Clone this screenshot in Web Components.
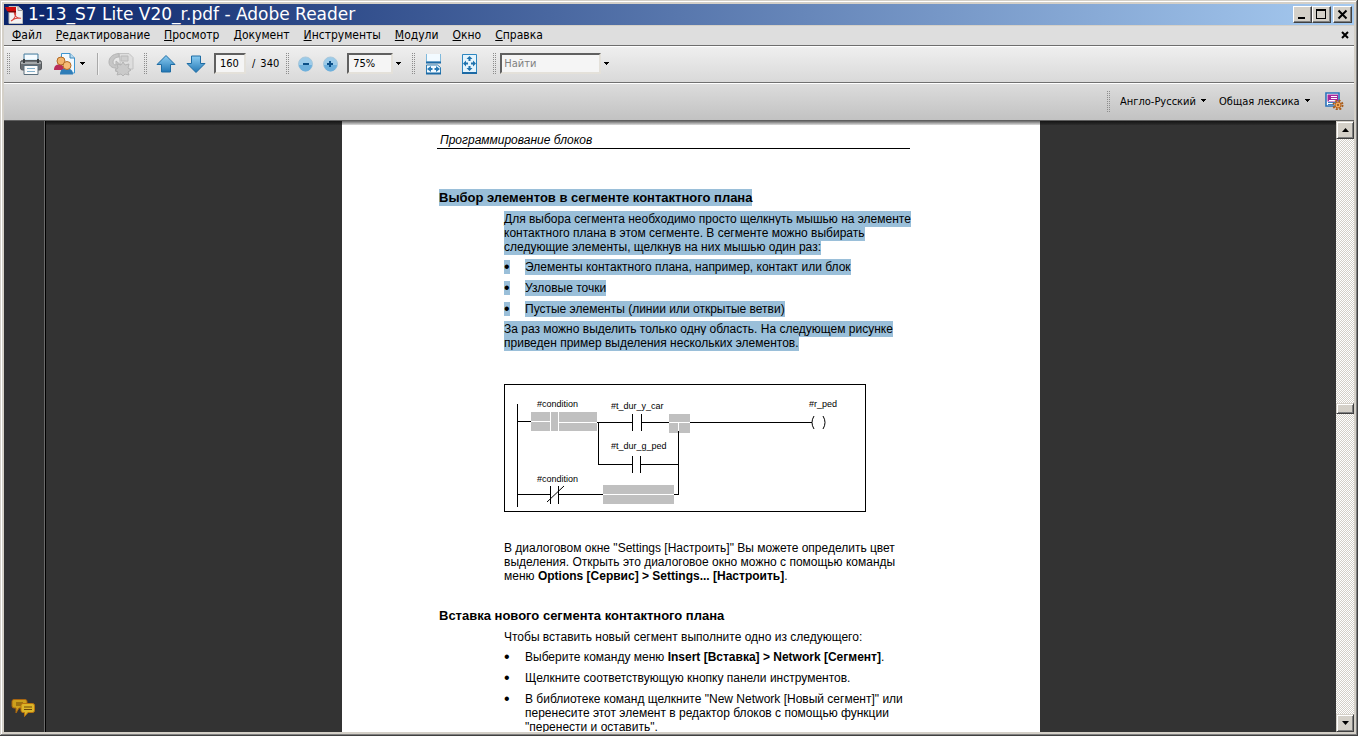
<!DOCTYPE html>
<html lang="ru">
<head>
<meta charset="utf-8">
<title>1-13_S7 Lite V20_r.pdf - Adobe Reader</title>
<style>
  html, body { margin: 0; height: 100%; overflow: hidden; }
  body { font-family: "DejaVu Sans Condensed", "DejaVu Sans", sans-serif; font-size: 12px; color: #000; }
</style>
</head>
<body>
<reader-window></reader-window>

<script>
const define = (name, html) => {
  const template = document.createElement('template');
  template.innerHTML = html;
  customElements.define(name, class extends HTMLElement {
    constructor() {
      super();
      this.attachShadow({ mode: 'open' }).append(template.content.cloneNode(true));
    }
  });
};

/* Small building blocks */
define('tool-grip', `
<style>
  :host { display: block; flex: none; width: 3px; height: 21px;
    background: conic-gradient(#8c8c8c 25%, transparent 0) 1px 0 / 2px 2px; }
</style>`);

define('drop-arrow', `
<style>
  :host { display: block; flex: none; width: 7px; height: 4px; }
  button { display: block; border: 0; padding: 0; background: none; width: 7px; height: 4px; }
  svg { display: block; }
</style>
<button aria-label="Открыть список"><svg width="7" height="4" viewBox="0 0 7 4" shape-rendering="crispEdges"><path d="M1 0h5v1H1zM2 1h3v1H2zM3 2h1v1H3z"/></svg></button>`);

define('tool-button', `
<style>
  :host { display: block; flex: none; width: 30px; height: 30px; }
  :host([narrow]) { width: 25px; }
  button { display: flex; align-items: center; justify-content: center; width: 100%; height: 100%;
    border: 0; padding: 0; background: none; }
</style>
<button><slot></slot></button>`);

define('menu-item', `
<style>
  :host { display: block; }
  button { border: 0; padding: 0; background: none; font: inherit; color: inherit; line-height: 18px; }
</style>
<button><slot></slot></button>`);

define('title-bar', `
<style>
  :host { display: flex; align-items: center; height: 21px; padding: 0 2px 0 1px; box-sizing: border-box;
    background: linear-gradient(90deg, #0a246a, #a6caf0); color: #fff; }
  h1 { flex: 1; margin: 0 0 0 4px; font: 17px/21px "DejaVu Sans", sans-serif; white-space: nowrap; }
  .icon { display: block; }
  button { width: 19px; height: 17px; padding: 0; border: 1px solid; border-color: #fff #404040 #404040 #fff;
    box-shadow: inset -1px -1px #808080; background: #d4d0c8; display: block; }
  button svg { display: block; }
  .close { margin-left: 2px; }
</style>
<svg class="icon" width="19" height="18" viewBox="0 0 19 18">
  <path d="M4 .5h9l4.500 4V17.500H4z" fill="#f2f2f2" stroke="#bbb"/>
  <path d="M13 .5v4h4.500" fill="#ddd" stroke="#999"/>
  <path d="M6 15c3-1.500 5-5 4.600-8 0-1.400-1.500-1.200-1.200.3.6 3 3.300 5 6.600 5-3-.8-7 .2-10 2.700z" fill="none" stroke="#d8453c" stroke-width="1.100"/>
  <path d="M0 1h11v4H2z" fill="#cf0a0a"/><path d="M2 5h9v1.500H4z" fill="#7d0606"/>
</svg>
<h1>1-13_S7 Lite V20_r.pdf - Adobe Reader</h1>
<button aria-label="Свернуть"><svg width="17" height="15"><path d="M4 10h7v2H4z"/></svg></button>
<button aria-label="Развернуть"><svg width="17" height="15"><path fill-rule="evenodd" d="M3 2h10v10H3zM4 4v7h8V4z"/></svg></button>
<button class="close" aria-label="Закрыть"><svg width="17" height="15"><path d="M4.500 3.500l8 8M12.500 3.500l-8 8" stroke="#000" stroke-width="2"/></svg></button>
`);

define('menu-bar', `
<style>
  :host { display: flex; align-items: center; gap: 14px; height: 21px; padding: 0 5px 2px 8px; box-sizing: border-box;
    background: #dedede; border-top: 1px solid #d4d0c8; border-bottom: 1px solid #6e6e6e; font-size: 12px; }
  .close { margin-left: auto; border: 0; padding: 0; background: none; width: 8px; height: 8px; }
  .close svg { display: block; }
</style>
<menu-item><u>Ф</u>айл</menu-item>
<menu-item><u>Р</u>едактирование</menu-item>
<menu-item><u>П</u>росмотр</menu-item>
<menu-item><u>Д</u>окумент</menu-item>
<menu-item><u>И</u>нструменты</menu-item>
<menu-item><u>М</u>одули</menu-item>
<menu-item><u>О</u>кно</menu-item>
<menu-item><u>С</u>правка</menu-item>
<button class="close" aria-label="Закрыть документ"><svg width="8" height="8"><path d="M1 1l6 6M7 1l-6 6" stroke="#000" stroke-width="2" fill="none"/></svg></button>
`);

define('main-toolbar', `
<style>
  :host { display: flex; align-items: center; height: 37px; box-sizing: border-box; padding: 0 3px 2px;
    background: linear-gradient(#efefef, #d9d9d9); border-top: 1px solid #fff; border-bottom: 1px solid #707070; font-size: 11px; }
  svg { display: block; overflow: visible; }
  .group { display: flex; align-items: center; }
  input, select { box-sizing: border-box; height: 21px; margin: 0; padding: 0 4px; border: 2px solid; border-radius: 0;
    border-color: #606060 #e4e1da #e4e1da #606060; background: #f5f5f5; font: inherit; color: #000; appearance: none; outline: 0; }
  .page { width: 32px; margin-left: 3px; }
  .zoom { width: 46px; margin-left: 4px; }
  .find { width: 101px; padding: 0 2px; }
  .find::placeholder { color: #808080; opacity: 1; }
  .total { display: flex; gap: 5px; padding: 0 7px 0 6px; }
  .rule { width: 1px; height: 22px; background: #a9a9a9; border-right: 1px solid #f2f2f2; margin: 0 7px 0 9px; }
  drop-arrow { margin: 0 2px; }
  tool-grip { margin-right: 4px; }
  .print { margin: 0 6px 0 2px; }
  .nav { margin-left: 8px; }
  .fit { margin-left: 8px; }
  .whole { margin-left: 6px; }
</style>
<div class="group">
  <tool-grip></tool-grip>
  <tool-button class="print">
    <svg width="24" height="24" viewBox="0 0 24 24">
      <path d="M5 12V2h14v10z" fill="#d9edf8" stroke="#4d7f9d"/>
      <path d="M6 3h12v4H6z" fill="#f5fbff"/>
      <rect x="1.500" y="8.500" width="21" height="9.500" rx="2" fill="#6c7074" stroke="#55595c"/>
      <path d="M2 10h20v2H2z" fill="#a4a8aa"/><path d="M4 7h2v4H4zM18 7h2v4h-2z" fill="#3d4042"/>
      <path d="M5 13.500h14v9H5z" fill="#fbfbfb" stroke="#5a6f7d"/>
      <path d="M8 16.500h8M8 19.500h8" stroke="#84b0ca"/>
    </svg>
  </tool-button>
  <tool-button narrow>
    <svg width="24" height="24" viewBox="0 0 24 24">
      <path d="M8.500 1.500H17l4.500 4.500v15h-13z" fill="#f2f9fe" stroke="#3c95d0"/>
      <path d="M17 1.500V6h4.500" fill="#b9dbf0" stroke="#3c85b8"/>
      <path d="M1 18c0-4 2-5.500 5-5.500s5 1.500 5 5.500z" fill="#b92c59"/>
      <circle cx="8" cy="9" r="4" fill="#f2b46c" stroke="#b26a25"/>
      <path d="M7 22.500c0-4 2-6 6.500-6s6.500 2 6.500 6z" fill="#2f7db8"/>
      <circle cx="14" cy="13.500" r="4" fill="#f6bc76" stroke="#b26a25"/>
    </svg>
  </tool-button>
  <drop-arrow></drop-arrow>
  <span class="rule"></span>
  <tool-button>
    <svg width="26" height="24" viewBox="0 0 26 24">
      <path d="M11 1.500h10l4 4V17H13z" fill="#dedede" stroke="#c2c2c2"/>
      <path d="M13 4h7v5h-7z" fill="#cfcfcf" stroke="#bababa"/>
      <path d="M11 1.500C4 2 1 6 1 10c0 4 3 6 7 6v4l6-6-6-5v4c-2 0-3-1-3-3 0-3 3-5 6-5z" fill="#c6c6c6" stroke="#b4b4b4"/>
      <path d="M15 10l2 3 4-1-1 4 3 2-3 2 1 3-4-1-2 2-2-2-4 1 1-3-3-2 3-2-1-4 4 1z" fill="#cacaca" stroke="#b4b4b4"/>
    </svg>
  </tool-button>
</div>
<div class="group">
  <tool-grip class="nav"></tool-grip>
  <tool-button>
    <svg width="20" height="20" viewBox="0 0 20 20"><defs><linearGradient id="a" x2="0" y2="1"><stop stop-color="#8accf2"/><stop offset="1" stop-color="#2377b4"/></linearGradient></defs>
      <path d="M10 1.500l9 9h-4.500V18h-9v-7.500H1z" fill="url(#a)" stroke="#1e6ca4"/></svg>
  </tool-button>
  <tool-button>
    <svg width="20" height="20" viewBox="0 0 20 20"><path d="M10 18.500l9-9h-4.500V2h-9v7.500H1z" fill="url(#a)" stroke="#1e6ca4"/></svg>
  </tool-button>
  <input class="page" value="160" aria-label="Номер страницы">
  <span class="total"><span>/</span><span>340</span></span>
</div>
<div class="group">
  <tool-grip></tool-grip>
  <tool-button narrow>
    <svg width="16" height="16" viewBox="0 0 16 16"><circle cx="7.500" cy="8" r="7" fill="#9ccbe9" stroke="#a9c8db"/><path d="M1 9a6.500 6.500 0 0 0 13 0z" fill="#6eb0dc"/><path d="M5 7h6v2H5z" fill="#0b4f87"/></svg>
  </tool-button>
  <tool-button narrow>
    <svg width="16" height="16" viewBox="0 0 16 16"><circle cx="7.500" cy="8" r="7" fill="#9ccbe9" stroke="#a9c8db"/><path d="M1 9a6.500 6.500 0 0 0 13 0z" fill="#6eb0dc"/><path d="M4 7h2V5h2v2h2v2H8v2H6V9H4z" fill="#0b4f87"/></svg>
  </tool-button>
  <select class="zoom" aria-label="Масштаб"><option>75%</option></select>
  <drop-arrow></drop-arrow>
  <tool-grip class="fit"></tool-grip>
  <tool-button>
    <svg width="18" height="22" viewBox="0 0 18 22"><path d="M1.500 1v8h14V1" fill="#f2faff" stroke="#7fb9dc"/><path d="M1.500 20.500V12h11l3 2.500v6z" fill="#f2faff" stroke="#2d7cb3"/><path d="M1 20.500h15M1 9.500h15" stroke="#1c6aa5" stroke-width="2"/><path d="M2 16l4-3v2h1.500v2H6v2zM15 16l-4-3v2H9.500v2H11v2z" fill="#2879b3"/></svg>
  </tool-button>
  <tool-button class="whole">
    <svg width="18" height="22" viewBox="0 0 18 22"><path d="M1.500 1.500h14v18h-14z" fill="#e4f4fd" stroke="#2d86c0"/><path d="M1 20h15" stroke="#1c6aa5" stroke-width="2"/><path d="M8.500 3l3 3h-2v2h-2V6h-2zM8.500 18l3-3h-2v-2h-2v2h-2zM2 10.500l3-3v2h2v2H5v2zM15 10.500l-3-3v2h-2v2h2v2z" fill="#1f72ad"/></svg>
  </tool-button>
</div>
<div class="group">
  <tool-grip class="fit"></tool-grip>
  <input class="find" placeholder="Найти" aria-label="Найти">
  <drop-arrow></drop-arrow>
</div>
`);

define('lookup-toolbar', `
<style>
  :host { display: flex; align-items: center; justify-content: flex-end; height: 38px; box-sizing: border-box; padding: 0 10px 2px;
    background: linear-gradient(#dcdcdc, #c2c2c2); border-top: 1px solid #fff; border-bottom: 1px solid #5e5e5e; font-size: 11px; }
  select { appearance: none; border: 0; margin: 0; padding: 0; background: none; font: inherit; color: #000; outline: 0; }
  tool-grip { margin-right: 10px; }
  drop-arrow { margin: 0 12px 0 4px; }
  button { border: 0; padding: 0; background: none; margin-left: 2px; }
  svg { display: block; }
</style>
<tool-grip></tool-grip>
<select aria-label="Направление перевода"><option>Англо-Русский</option></select>
<drop-arrow></drop-arrow>
<select aria-label="Словарь"><option>Общая лексика</option></select>
<drop-arrow></drop-arrow>
<button aria-label="Настройки словаря">
  <svg width="19" height="18" viewBox="0 0 19 18">
    <path d="M1 1h13v13H1z" fill="#fff" stroke="#2a72ba" stroke-width="1.600"/>
    <path d="M2.500 2.500h10.500v7h-10.500z" fill="#a5279c"/><path d="M6 4.500h6M6 6.500h6M4 8.500h8" stroke="#fff"/>
    <path d="M3 10.500h9M3 12.500h6" stroke="#3e7fc1"/>
    <circle cx="13" cy="13" r="4.500" fill="none" stroke="#a85c1b" stroke-width="2" stroke-dasharray="2 1.530"/>
    <circle cx="13" cy="13" r="3" fill="#f2a95d" stroke="#b56420"/><circle cx="13" cy="13" r="1" fill="#8a4a14"/>
  </svg>
</button>
`);

define('side-strip', `
<style>
  :host { display: flex; align-items: flex-end; flex: none; width: 42px; box-sizing: border-box; padding: 0 0 13px 7px;
    background: #333; border-right: 1px solid #000; box-shadow: inset -1px 0 #6b6b6b; }
  button { border: 0; padding: 0; background: none; }
  svg { display: block; }
</style>
<button aria-label="Комментарии">
  <svg width="25" height="21" viewBox="0 0 25 21">
    <path d="M3 1.500h11q2 0 2 2V8q0 2-2 2H8l-3 5v-5H3Q1 10 1 8V3.500q0-2 2-2z" fill="#cda01c" stroke="#a8650f"/>
    <path d="M5 5h7M5 7h5" stroke="#6a4708"/>
    <path d="M12 5.500h9.500q2 0 2 2v5q0 2-2 2H17l-3.500 4v-4H12q-2 0-2-2v-5q0-2 2-2z" fill="#dcb528" stroke="#b8720f"/>
    <path d="M13 9h8M13 11.500h8" stroke="#6a4708"/>
  </svg>
</button>
`);

define('scroll-rail', `
<style>
  :host { display: flex; flex-direction: column; flex: none; width: 18px; box-sizing: border-box;
    background: conic-gradient(#fff 25%, #d4d0c8 0 50%, #fff 0 75%, #d4d0c8 0) 0 0 / 2px 2px; }
  button { flex: none; display: flex; align-items: center; justify-content: center; width: 18px; height: 18px; padding: 0;
    border: 1px solid; border-color: #d4d0c8 #404040 #404040 #d4d0c8; box-shadow: inset 1px 1px #fff, inset -1px -1px #808080; background: #d4d0c8; }
  .thumb { height: 11px; }
  .before { flex: 22; } .after { flex: 25; }
</style>
<button aria-label="Вверх"><svg width="7" height="4"><path d="M0 4h7L3.500 0z"/></svg></button>
<div class="before"></div>
<button class="thumb" aria-label="Полоса прокрутки"></button>
<div class="after"></div>
<button aria-label="Вниз"><svg width="7" height="4"><path d="M0 0h7L3.500 4z"/></svg></button>
`);

define('ladder-diagram', `
<style>
  :host { display: block; width: 362px; }
  svg { display: block; font: 9px "Liberation Sans", Arial, sans-serif; }
  .w { fill: none; stroke: #000; } .s { fill: none; stroke: #fff; } .g { fill: #c0c0c0; }
</style>
<svg width="362" height="128" viewBox="0 0 362 128" role="img" aria-label="Контактный план">
  <rect class="w" x=".5" y=".5" width="361" height="127"/>
  <path class="g" d="M27 28h66v19H27zM165 30h21v19h-21zM99 101h71v19H99z"/>
  <path class="w" d="M13.500 20v103M13 37.500h14M92 38.500h36M94.500 38v43M128.500 30v17M137.500 30v17M138 38.500h27M186 38.500h122M174.500 47v64M94 80.500h34M128.500 72v17M136.500 72v17M137 80.500h37M13 110.500h33M46.500 102v18M54.500 102v18M55 110.500h44M170 110.500h5M43 118l17-16"/>
  <path class="s" d="M27 37.500h19M46.500 28v19M54.500 28v19M55 38.500h38M165 38.500h21M174.500 39v8M99 110.500h71"/>
  <path class="w" d="M310 32q-4 6.500 0 13M319 32q4 6.500 0 13"/>
  <text x="33" y="23">#condition</text><text x="107" y="25">#t_dur_y_car</text><text x="305" y="23">#r_ped</text>
  <text x="107" y="65">#t_dur_g_ped</text><text x="33" y="98">#condition</text>
</svg>
`);

define('pdf-page', `
<style>
  :host { display: block; flex: none; width: 698px; box-sizing: border-box; padding: 12px 0 0 97px; background: #fff;
    font: 12px/14px "Liberation Sans", Arial, sans-serif; white-space: nowrap; }
  header { margin: 0 130px 41px -2px; padding: 0 0 1px 3px; border-bottom: 1px solid #000; font-style: italic; }
  h2 { margin: 0 0 6px; font-size: 13px; line-height: 16px; }
  section { margin: 0 0 25px 65px; }
  p { margin: 0 0 6px; }
  ul { list-style: none; display: grid; gap: 7px; margin: 0 0 6px; padding: 0; }
  li { display: grid; grid-template-columns: 21px 1fr; }
  li > :first-child { font-size: 16px; line-height: 14px; }
  li > mark:first-child { width: 6px; padding: 0; }
  mark { background: #9abfd9; color: inherit; padding: 1px 0; }
  ladder-diagram { margin: 34px 0 29px; }
</style>
<header>Программирование блоков</header>
<h2><mark>Выбор элементов в сегменте контактного плана</mark></h2>
<section>
  <p><mark>Для выбора сегмента необходимо просто щелкнуть мышью на элементе<br>контактного плана в этом сегменте. В сегменте можно выбирать<br>следующие элементы, щелкнув на них мышью один раз:</mark></p>
  <ul>
    <li><mark>•</mark><span><mark>Элементы контактного плана, например, контакт или блок</mark></span></li>
    <li><mark>•</mark><span><mark>Узловые точки</mark></span></li>
    <li><mark>•</mark><span><mark>Пустые элементы (линии или открытые ветви)</mark></span></li>
  </ul>
  <p><mark>За раз можно выделить только одну область. На следующем рисунке<br>приведен пример выделения нескольких элементов.</mark></p>
  <ladder-diagram></ladder-diagram>
  <p>В диалоговом окне "Settings [Настроить]" Вы можете определить цвет<br>выделения. Открыть это диалоговое окно можно с помощью команды<br>меню <b>Options [Сервис] &gt; Settings... [Настроить]</b>.</p>
</section>
<h2>Вставка нового сегмента контактного плана</h2>
<section>
  <p>Чтобы вставить новый сегмент выполните одно из следующего:</p>
  <ul>
    <li><span>•</span><span>Выберите команду меню <b>Insert [Вставка] &gt; Network [Сегмент]</b>.</span></li>
    <li><span>•</span><span>Щелкните соответствующую кнопку панели инструментов.</span></li>
    <li><span>•</span><span>В библиотеке команд щелкните "New Network [Новый сегмент]" или<br>перенесите этот элемент в редактор блоков с помощью функции<br>"перенести и оставить".</span></li>
  </ul>
</section>
`);

define('reader-window', `
<style>
  :host { display: flex; flex-direction: column; height: 100vh; box-sizing: border-box; padding: 4px; background: #d4d0c8;
    box-shadow: inset -1px -1px #404040, inset 1px 1px #d4d0c8, inset -2px -2px #808080, inset 2px 2px #fff; }
  title-bar, menu-bar, main-toolbar, lookup-toolbar { flex: none; }
  .work { display: flex; flex: 1; min-height: 0; }
  main { position: relative; flex: 1; display: flex; justify-content: center; overflow: hidden; background: #333; min-width: 0; }
  main::before { content: ""; position: absolute; inset: 0 0 auto; height: 4px; background: linear-gradient(#0009, #0002); }
</style>
<title-bar></title-bar>
<menu-bar></menu-bar>
<main-toolbar></main-toolbar>
<lookup-toolbar></lookup-toolbar>
<div class="work">
  <side-strip></side-strip>
  <main><pdf-page></pdf-page></main>
  <scroll-rail></scroll-rail>
</div>
`);
</script>
</body>
</html>
